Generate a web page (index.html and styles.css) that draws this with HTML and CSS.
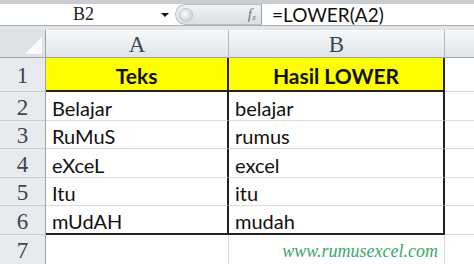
FILE: index.html
```html
<!DOCTYPE html>
<html>
<head>
<meta charset="utf-8">
<link rel="stylesheet" href="styles.css">
</head>
<body>
<div class="app">
  <div class="topband"></div>
  <div class="fbar">
    <div class="namebox"><span class="ref">B2</span><span class="arrow"></span></div>
    <div class="pill">
      <span class="knob"></span>
      <span class="fx">f<sub>x</sub></span>
    </div>
    <div class="formula">=LOWER(A2)</div>
  </div>
  <div class="gap"></div>
  <div class="sheet">
    <div class="corner"><span class="tri"></span></div>
    <div class="colhead">A</div>
    <div class="colhead">B</div>
    <div class="colhead last"></div>

    <div class="rowhead">1</div>
    <div class="cell title a">Teks</div>
    <div class="cell title b">Hasil LOWER</div>
    <div class="cell c"></div>

    <div class="rowhead">2</div>
    <div class="cell a">Belajar</div>
    <div class="cell b">belajar</div>
    <div class="cell c"></div>

    <div class="rowhead">3</div>
    <div class="cell a">RuMuS</div>
    <div class="cell b">rumus</div>
    <div class="cell c"></div>

    <div class="rowhead">4</div>
    <div class="cell a">eXceL</div>
    <div class="cell b">excel</div>
    <div class="cell c"></div>

    <div class="rowhead">5</div>
    <div class="cell a">Itu</div>
    <div class="cell b">itu</div>
    <div class="cell c"></div>

    <div class="rowhead">6</div>
    <div class="cell a lastrow">mUdAH</div>
    <div class="cell b lastrow">mudah</div>
    <div class="cell c"></div>

    <div class="rowhead">7</div>
    <div class="cell plain"></div>
    <div class="cell plain site">www.rumusexcel.com</div>
    <div class="cell c"></div>
  </div>
</div>
</body>
</html>
```
FILE: styles.css
```css
* { box-sizing: border-box; }
html, body { margin: 0; padding: 0; background: #fff; }
body { width: 474px; height: 264px; overflow: hidden; font-family: "Lato", "Open Sans", sans-serif; }

.topband { height: 4px; background: #c9cdd2; }

.fbar {
  display: flex;
  height: 21px;
  background: #fff;
}
.namebox {
  width: 175px;
  display: flex;
  align-items: center;
  font-family: "Liberation Serif", serif;
  font-size: 18px;
  color: #222;
}
.namebox .ref { flex: 1; text-align: center; padding-left: 6px; }
.namebox .arrow {
  width: 0; height: 0;
  border-left: 4px solid transparent;
  border-right: 4px solid transparent;
  border-top: 4px solid #111;
  margin-right: 6px;
}
.pill {
  width: 87px;
  background: linear-gradient(#f1f2f4, #dcdfe3);
  border: 1px solid #b9bec5;
  border-right: 1px solid #9aa0a8;
  border-radius: 11px 0 0 11px;
  display: flex;
  align-items: center;
  justify-content: space-between;
  padding: 0 5px 0 3px;
}
.knob {
  width: 14px; height: 14px;
  border-radius: 50%;
  background: radial-gradient(circle at 40% 40%, #fbfbfb, #d3d6da 70%);
  border: 1px solid #c3c7cc;
}
.fx {
  font-family: "Liberation Serif", serif;
  font-style: italic;
  font-size: 15px;
  color: #777;
}
.fx sub { font-size: 9px; vertical-align: -1px; }
.formula {
  flex: 1;
  font-size: 19px;
  color: #111;
  padding-left: 10px;
  display: flex;
  align-items: center;
}
.gap {
  height: 5px;
  border-top: 1px solid #aab0b7;
  background: #e3e6e9;
}

.sheet {
  display: grid;
  grid-template-columns: 46px 183px 216px 1fr;
  grid-template-rows: 28px 34px 29px 28px 29px 28px 29px 30px;
}
.corner {
  background: #dfe2e5;
  border-right: 1px solid #9ea4ab;
  border-bottom: 1px solid #9ea4ab;
  position: relative;
}
.corner .tri {
  position: absolute;
  right: 3px; bottom: 3px;
  width: 0; height: 0;
  border-left: 17px solid transparent;
  border-bottom: 17px solid #fafafa;
}
.colhead {
  background: linear-gradient(#f7f8f9, #e1e4e8);
  border-right: 1px solid #b4b9bf;
  border-bottom: 1px solid #9ea4ab;
  display: flex;
  align-items: center;
  justify-content: center;
  font-family: "Liberation Serif", serif;
  font-size: 23px;
  color: #3b4655;
  padding-top: 2px;
}
.colhead.last { border-right: none; }
.rowhead {
  background: #e8eaed;
  border-right: 1px solid #9ea4ab;
  border-bottom: 1px solid #c9cdd2;
  display: flex;
  align-items: center;
  justify-content: center;
  font-family: "Liberation Serif", serif;
  font-size: 23px;
  color: #3b4655;
  padding-top: 3px;
}
.cell {
  border-right: 1px solid #dadcdf;
  border-bottom: 1px solid #dadcdf;
  display: flex;
  align-items: center;
  padding-left: 6px;
  padding-top: 3px;
  font-size: 20px;
  color: #111;
}
.cell.a { border-left: 0; border-right: 2px solid #222; }
.cell.b { border-right: 2px solid #222; }
.cell.title {
  background: #ffff00;
  font-weight: bold;
  justify-content: center;
  padding-left: 0;
  font-size: 21px;
  border-bottom: 2px solid #222;
}
.cell.lastrow { border-bottom: 2px solid #222; }
.cell.c { border-right: none; }
.cell.site {
  justify-content: flex-end;
  padding-right: 6px;
  font-family: "Liberation Serif", serif;
  font-style: italic;
  font-size: 18px;
  color: #3aa76b;
}
```
